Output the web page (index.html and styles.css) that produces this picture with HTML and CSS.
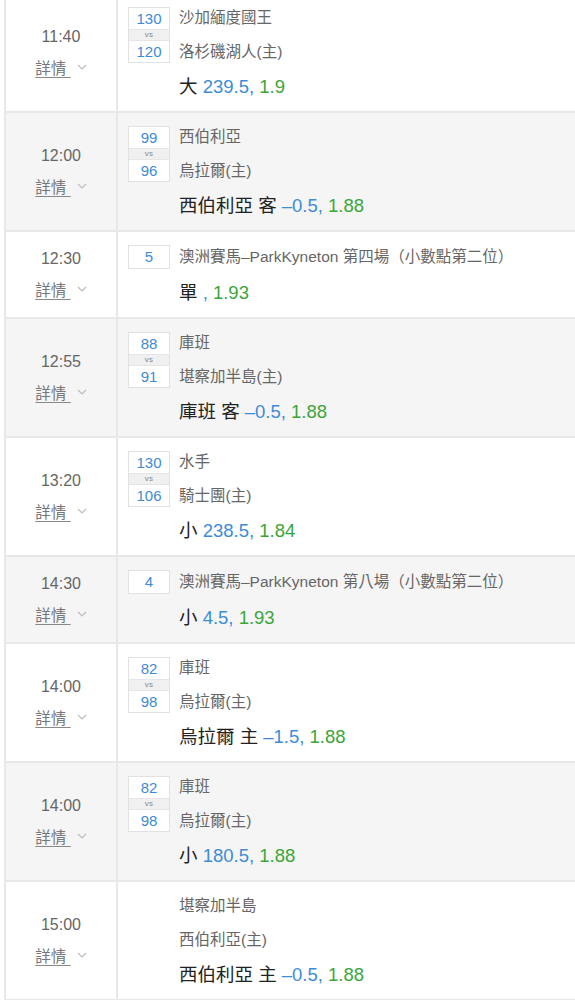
FILE: index.html
```html
<!DOCTYPE html>
<html lang="zh-Hant">
<head>
<meta charset="utf-8">
<title>賽事列表</title>
<link rel="stylesheet" href="styles.css">
</head>
<body>
<div class="list">

  <div class="row">
    <div class="time-cell">
      <div class="time">11:40</div>
      <div class="detail"><span class="detail-link">詳情&nbsp;</span><svg class="chev" viewBox="0 0 10 6" width="10" height="6"><path d="M1 1 L5 5 L9 1" fill="none" stroke="#bdbdbd" stroke-width="1.2"/></svg></div>
    </div>
    <div class="info-cell">
      <div class="match">
        <div class="score"><div class="num">130</div><div class="vs">vs</div><div class="num">120</div></div>
        <div class="teams"><div class="team">沙加緬度國王</div><div class="team">洛杉磯湖人(主)</div></div>
      </div>
      <div class="bet">大 <span class="blue">239.5,</span> <span class="green">1.9</span></div>
    </div>
  </div>

  <div class="row alt">
    <div class="time-cell">
      <div class="time">12:00</div>
      <div class="detail"><span class="detail-link">詳情&nbsp;</span><svg class="chev" viewBox="0 0 10 6" width="10" height="6"><path d="M1 1 L5 5 L9 1" fill="none" stroke="#bdbdbd" stroke-width="1.2"/></svg></div>
    </div>
    <div class="info-cell">
      <div class="match">
        <div class="score"><div class="num">99</div><div class="vs">vs</div><div class="num">96</div></div>
        <div class="teams"><div class="team">西伯利亞</div><div class="team">烏拉爾(主)</div></div>
      </div>
      <div class="bet">西伯利亞 客 <span class="blue">–0.5,</span> <span class="green">1.88</span></div>
    </div>
  </div>

  <div class="row">
    <div class="time-cell">
      <div class="time">12:30</div>
      <div class="detail"><span class="detail-link">詳情&nbsp;</span><svg class="chev" viewBox="0 0 10 6" width="10" height="6"><path d="M1 1 L5 5 L9 1" fill="none" stroke="#bdbdbd" stroke-width="1.2"/></svg></div>
    </div>
    <div class="info-cell">
      <div class="match">
        <div class="score single"><div class="num">5</div></div>
        <div class="teams single"><div class="team">澳洲賽馬–ParkKyneton 第四場（小數點第二位）</div></div>
      </div>
      <div class="bet">單 <span class="blue">,</span> <span class="green">1.93</span></div>
    </div>
  </div>

  <div class="row alt">
    <div class="time-cell">
      <div class="time">12:55</div>
      <div class="detail"><span class="detail-link">詳情&nbsp;</span><svg class="chev" viewBox="0 0 10 6" width="10" height="6"><path d="M1 1 L5 5 L9 1" fill="none" stroke="#bdbdbd" stroke-width="1.2"/></svg></div>
    </div>
    <div class="info-cell">
      <div class="match">
        <div class="score"><div class="num">88</div><div class="vs">vs</div><div class="num">91</div></div>
        <div class="teams"><div class="team">庫班</div><div class="team">堪察加半島(主)</div></div>
      </div>
      <div class="bet">庫班 客 <span class="blue">–0.5,</span> <span class="green">1.88</span></div>
    </div>
  </div>

  <div class="row">
    <div class="time-cell">
      <div class="time">13:20</div>
      <div class="detail"><span class="detail-link">詳情&nbsp;</span><svg class="chev" viewBox="0 0 10 6" width="10" height="6"><path d="M1 1 L5 5 L9 1" fill="none" stroke="#bdbdbd" stroke-width="1.2"/></svg></div>
    </div>
    <div class="info-cell">
      <div class="match">
        <div class="score"><div class="num">130</div><div class="vs">vs</div><div class="num">106</div></div>
        <div class="teams"><div class="team">水手</div><div class="team">騎士團(主)</div></div>
      </div>
      <div class="bet">小 <span class="blue">238.5,</span> <span class="green">1.84</span></div>
    </div>
  </div>

  <div class="row alt">
    <div class="time-cell">
      <div class="time">14:30</div>
      <div class="detail"><span class="detail-link">詳情&nbsp;</span><svg class="chev" viewBox="0 0 10 6" width="10" height="6"><path d="M1 1 L5 5 L9 1" fill="none" stroke="#bdbdbd" stroke-width="1.2"/></svg></div>
    </div>
    <div class="info-cell">
      <div class="match">
        <div class="score single"><div class="num">4</div></div>
        <div class="teams single"><div class="team">澳洲賽馬–ParkKyneton 第八場（小數點第二位）</div></div>
      </div>
      <div class="bet">小 <span class="blue">4.5,</span> <span class="green">1.93</span></div>
    </div>
  </div>

  <div class="row">
    <div class="time-cell">
      <div class="time">14:00</div>
      <div class="detail"><span class="detail-link">詳情&nbsp;</span><svg class="chev" viewBox="0 0 10 6" width="10" height="6"><path d="M1 1 L5 5 L9 1" fill="none" stroke="#bdbdbd" stroke-width="1.2"/></svg></div>
    </div>
    <div class="info-cell">
      <div class="match">
        <div class="score"><div class="num">82</div><div class="vs">vs</div><div class="num">98</div></div>
        <div class="teams"><div class="team">庫班</div><div class="team">烏拉爾(主)</div></div>
      </div>
      <div class="bet">烏拉爾 主 <span class="blue">–1.5,</span> <span class="green">1.88</span></div>
    </div>
  </div>

  <div class="row alt">
    <div class="time-cell">
      <div class="time">14:00</div>
      <div class="detail"><span class="detail-link">詳情&nbsp;</span><svg class="chev" viewBox="0 0 10 6" width="10" height="6"><path d="M1 1 L5 5 L9 1" fill="none" stroke="#bdbdbd" stroke-width="1.2"/></svg></div>
    </div>
    <div class="info-cell">
      <div class="match">
        <div class="score"><div class="num">82</div><div class="vs">vs</div><div class="num">98</div></div>
        <div class="teams"><div class="team">庫班</div><div class="team">烏拉爾(主)</div></div>
      </div>
      <div class="bet">小 <span class="blue">180.5,</span> <span class="green">1.88</span></div>
    </div>
  </div>

  <div class="row">
    <div class="time-cell">
      <div class="time">15:00</div>
      <div class="detail"><span class="detail-link">詳情&nbsp;</span><svg class="chev" viewBox="0 0 10 6" width="10" height="6"><path d="M1 1 L5 5 L9 1" fill="none" stroke="#bdbdbd" stroke-width="1.2"/></svg></div>
    </div>
    <div class="info-cell">
      <div class="match">
        <div class="teams nobox"><div class="team">堪察加半島</div><div class="team">西伯利亞(主)</div></div>
      </div>
      <div class="bet">西伯利亞 主 <span class="blue">–0.5,</span> <span class="green">1.88</span></div>
    </div>
  </div>

</div>
</body>
</html>
```

FILE: styles.css
```css
* {
  box-sizing: border-box;
}

html, body {
  margin: 0;
  padding: 0;
  background: #ffffff;
}

body {
  font-family: "Liberation Sans", "Noto Sans CJK TC", sans-serif;
  color: #222;
  overflow: hidden;
}

.list {
  margin-top: -6px;
  margin-left: 4px;
  border-left: 2px solid #e8e8e8;
}

.row {
  display: flex;
  background: #ffffff;
  border-bottom: 2px solid #e8e8e8;
}

.row.alt {
  background: #f5f5f5;
}

.time-cell {
  width: 112px;
  flex: none;
  border-right: 2px solid #e8e8e8;
  display: flex;
  flex-direction: column;
  align-items: center;
  justify-content: center;
  gap: 8px;
}

.time {
  font-size: 16px;
  line-height: 24px;
  color: #666;
}

.detail {
  display: flex;
  align-items: center;
  line-height: 24px;
}

.detail-link {
  font-size: 15.5px;
  color: #777;
  text-decoration: underline;
  text-decoration-color: #888;
  text-underline-offset: 3px;
}

.chev {
  margin-left: 6px;
  margin-top: -4px;
  display: block;
}

.info-cell {
  flex: 1;
  padding: 13px 10px 12px 10px;
  display: flex;
  flex-direction: column;
  gap: 12px;
}

.match {
  display: flex;
  gap: 9px;
}

.score {
  width: 42px;
  flex: none;
  border: 1px solid #e2e2e2;
  background: #fff;
  display: flex;
  flex-direction: column;
}

.num {
  height: 21px;
  font-size: 15px;
  line-height: 21px;
  text-align: center;
  color: #3f8ad6;
}

.vs {
  height: 12px;
  font-size: 8px;
  line-height: 10px;
  text-align: center;
  color: #8a8a8a;
  background: #f0f0f0;
  border-top: 1px solid #e6e6e6;
  border-bottom: 1px solid #e6e6e6;
  letter-spacing: 0.3px;
}

.score.single {
  height: 24px;
}

.score.single .num {
  height: 22px;
  line-height: 22px;
}

.teams {
  display: flex;
  flex-direction: column;
  justify-content: space-between;
  height: 56px;
}

.teams.single {
  height: 24px;
  justify-content: center;
}

.teams.nobox {
  margin-left: 51px;
}

.team {
  font-size: 15.5px;
  line-height: 22px;
  color: #666;
  white-space: nowrap;
}

.teams.single .team {
  line-height: 24px;
}

.bet {
  font-size: 18.5px;
  line-height: 24px;
  color: #222;
  padding-left: 51px;
  white-space: nowrap;
}

.blue {
  color: #3d8cd8;
}

.green {
  color: #3ca53a;
}
```
